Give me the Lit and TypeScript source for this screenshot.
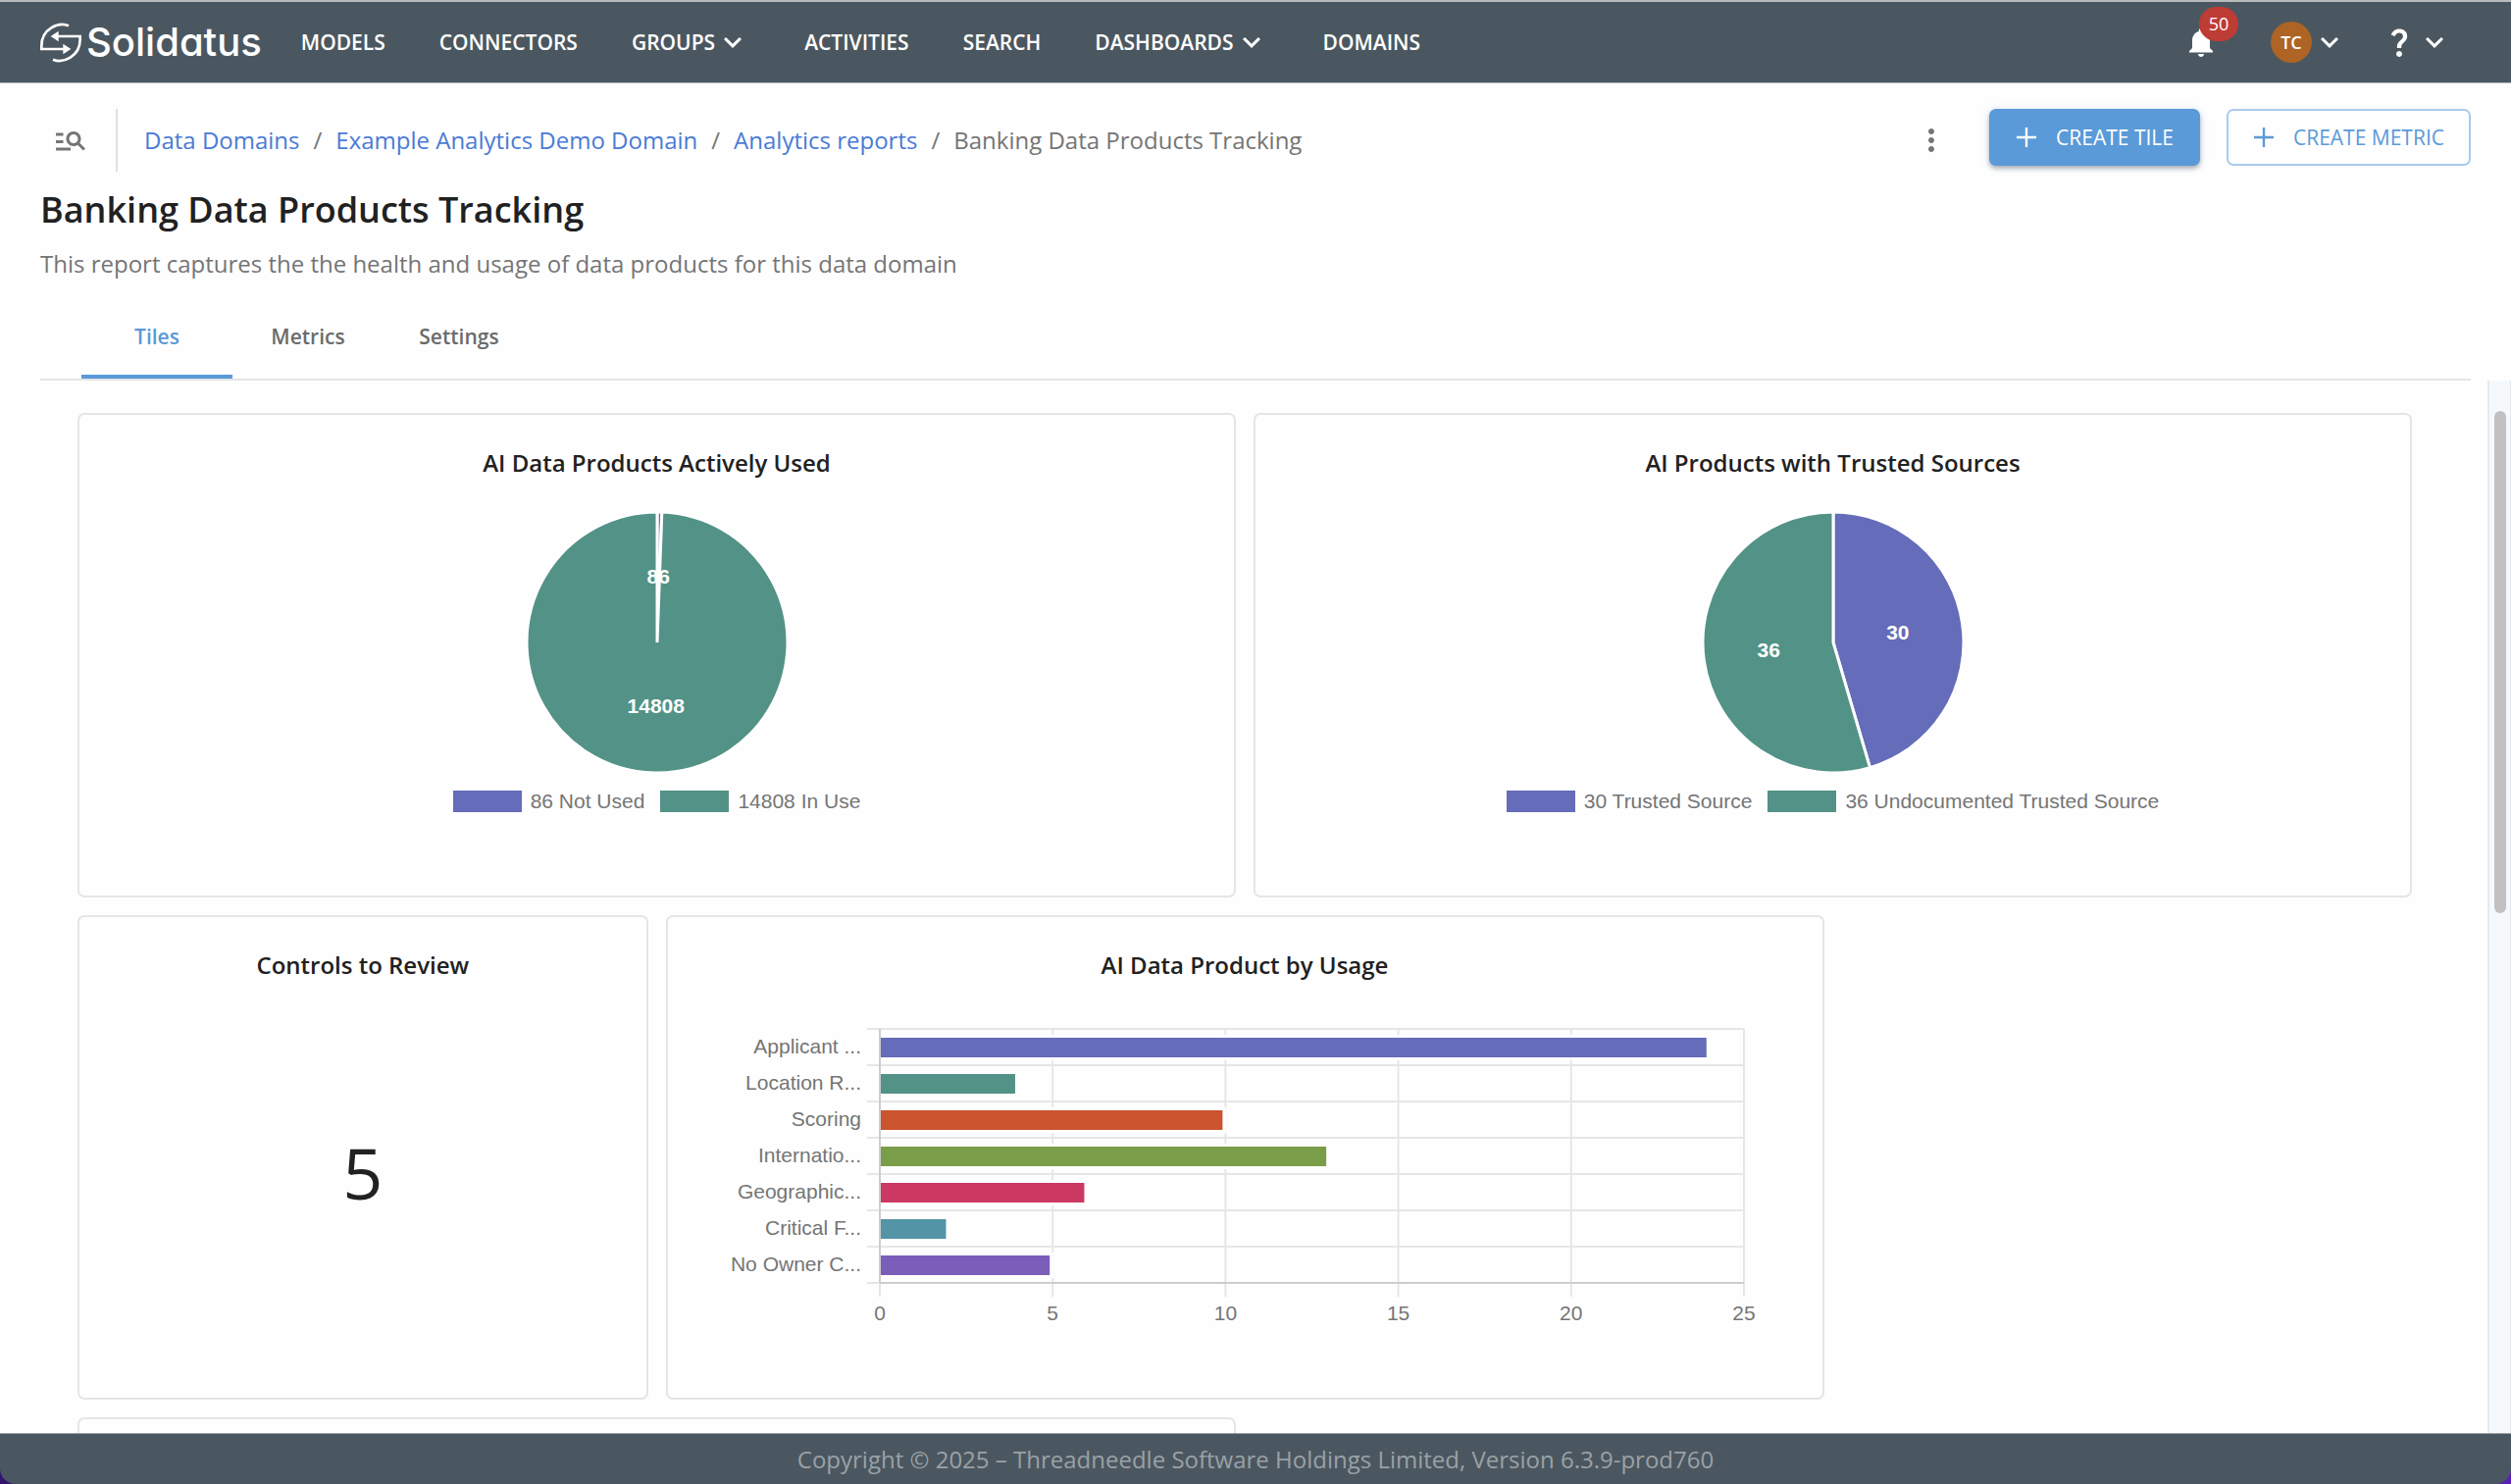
import { LitElement, html, svg, css } from "lit";
import { customElement, property } from "lit/decorators.js";

const ICONS = {
  chevron: "M16.59 8.59 12 13.17 7.41 8.59 6 10l6 6 6-6z",
  bell: "M12 22c1.1 0 2-.9 2-2h-4c0 1.1.89 2 2 2zm6-6v-5c0-3.07-1.64-5.64-4.5-6.32V4c0-.83-.67-1.5-1.5-1.5s-1.5.67-1.5 1.5v.68C7.63 5.36 6 7.92 6 11v5l-2 2v1h16v-1l-2-2z",
  question:
    "M11.07 12.85c.77-1.39 2.25-2.21 3.11-3.44.91-1.29.4-3.7-2.18-3.7-1.69 0-2.52 1.28-2.87 2.34L6.54 6.96C7.25 4.83 9.18 3 11.99 3c2.35 0 3.96 1.07 4.78 2.41.7 1.15 1.11 3.3.03 4.9-1.2 1.77-2.35 2.31-2.97 3.45-.25.46-.35.76-.35 2.24h-2.89c-.01-.78-.13-2.05.48-3.15zM14 20c0 1.1-.9 2-2 2s-2-.9-2-2 .9-2 2-2 2 .9 2 2z",
  search:
    "M7 9H2V7h5v2zm0 3H2v2h5v-2zm13.59 7-3.83-3.83c-.8.52-1.74.83-2.76.83-2.76 0-5-2.24-5-5s2.24-5 5-5 5 2.24 5 5c0 1.02-.31 1.96-.83 2.75L22 17.59 20.59 19zM17 11c0-1.65-1.35-3-3-3s-3 1.35-3 3 1.35 3 3 3 3-1.35 3-3zM2 19h10v-2H2v2z",
  more: "M12 8c1.1 0 2-.9 2-2s-.9-2-2-2-2 .9-2 2 .9 2 2 2zm0 2c-1.1 0-2 .9-2 2s.9 2 2 2 2-.9 2-2-.9-2-2-2zm0 6c-1.1 0-2 .9-2 2s.9 2 2 2 2-.9 2-2-.9-2-2-2z",
  plus: "M19.5 12.9h-6.6v6.6h-1.8v-6.6H4.5v-1.8h6.6V4.5h1.8v6.6h6.6z",
};

const icon = (name: keyof typeof ICONS) =>
  html`<svg class="icon" viewBox="0 0 24 24" aria-hidden="true"><path d=${ICONS[name]}></path></svg>`;

interface Slice {
  value: number;
  label: string;
  color: string;
}

@customElement("pie-chart")
class PieChart extends LitElement {
  @property({ attribute: false }) slices: Slice[] = [];

  static styles = css`
    :host {
      display: flex;
      flex-direction: column;
      align-items: center;
      gap: 17px;
      font-family: "Liberation Sans", Arial, sans-serif;
      font-size: 21px;
    }
    .pie {
      display: block;
      width: 268px;
      height: 268px;
      margin-top: 31px;
    }
    .slice {
      stroke: #fff;
      stroke-width: 3px;
      stroke-linejoin: bevel;
    }
    .value {
      fill: #fff;
      font-weight: 700;
      text-anchor: middle;
    }
    .legend {
      display: flex;
      gap: 16px;
      margin: 0;
      padding: 0;
      list-style: none;
      color: #757575;
    }
    .entry {
      display: flex;
      align-items: center;
      gap: 9px;
      line-height: 22px;
    }
    .swatch {
      width: 70px;
      height: 22px;
    }
  `;

  render() {
    const total = this.slices.reduce((sum, s) => sum + s.value, 0);
    const radius = 133;
    let from = 0;
    const arcs = this.slices.map((s) => {
      const to = from + (s.value / total) * Math.PI * 2;
      const mid = (from + to) / 2;
      const point = (a: number, r: number) => [134 + r * Math.sin(a), 134 - r * Math.cos(a)];
      const [x1, y1] = point(from, radius);
      const [x2, y2] = point(to, radius);
      const [tx, ty] = point(mid, radius / 2);
      const large = to - from > Math.PI ? 1 : 0;
      from = to;
      return { s, d: `M134 134L${x1} ${y1}A${radius} ${radius} 0 ${large} 1 ${x2} ${y2}Z`, tx, ty };
    });
    return html`
      <svg class="pie" viewBox="0 0 268 268" role="img">
        ${arcs.map((a) => svg`<path class="slice" d=${a.d} fill=${a.s.color}></path>`)}
        ${arcs.map((a) => svg`<text class="value" x=${a.tx} y=${a.ty + 6}>${a.s.value}</text>`)}
      </svg>
      <ul class="legend">
        ${this.slices.map(
          (s) => html`<li class="entry">
            <span class="swatch" style="background:${s.color}"></span>${s.value} ${s.label}
          </li>`
        )}
      </ul>
    `;
  }
}

@customElement("bar-chart")
class BarChart extends LitElement {
  @property({ attribute: false }) bars: Slice[] = [];

  static styles = css`
    :host {
      display: flex;
      justify-content: center;
    }
    .plot {
      display: block;
      width: 1100px;
      max-width: 100%;
      height: 320px;
      margin-top: 31px;
      font-family: "Liberation Sans", Arial, sans-serif;
      font-size: 21px;
    }
    .grid {
      stroke: #e6e6e6;
      stroke-width: 2px;
    }
    .axis {
      stroke: #cdcdcd;
      stroke-width: 2px;
    }
    .halo {
      fill: #fefefe;
    }
    .label {
      fill: #757575;
      text-anchor: end;
    }
    .tick {
      fill: #757575;
      text-anchor: middle;
    }
  `;

  render() {
    const left = 178;
    const top = 16;
    const row = 37;
    const unit = 35.24;
    const right = left + unit * 25;
    const bottom = top + row * this.bars.length;
    const ticks = [0, 5, 10, 15, 20, 25];
    const rows = [...this.bars.keys(), this.bars.length];
    return html`
      <svg class="plot" viewBox="0 0 1100 320" role="img">
        ${rows.map(
          (i) => svg`<line class="grid" x1=${left - 13} x2=${right} y1=${top + row * i} y2=${top + row * i}></line>`
        )}
        ${ticks.map(
          (t) => svg`<line class="grid" x1=${left + t * unit} x2=${left + t * unit} y1=${top} y2=${bottom + 14}></line>`
        )}
        ${this.bars.map((b, i) => {
          const y = top + row * i + 8;
          const w = b.value * unit - 4;
          return svg`
            <rect class="halo" x=${left} y=${y - 2} width=${w + 5} height="26"></rect>
            <rect x=${left + 1} y=${y + 1} width=${w} height="20" fill=${b.color}></rect>
            <text class="label" x=${left - 19} y=${y + 17}>${b.label}</text>`;
        })}
        <line class="axis" x1=${left} x2=${left} y1=${top} y2=${bottom}></line>
        <line class="axis" x1=${left} x2=${right} y1=${bottom} y2=${bottom}></line>
        ${ticks.map((t) => svg`<text class="tick" x=${left + t * unit} y=${bottom + 38}>${t}</text>`)}
      </svg>
    `;
  }
}

const NAV = [
  { label: "MODELS" },
  { label: "CONNECTORS" },
  { label: "GROUPS", menu: true },
  { label: "ACTIVITIES" },
  { label: "SEARCH" },
  { label: "DASHBOARDS", menu: true },
  { label: "DOMAINS" },
];

const CRUMBS = ["Data Domains", "Example Analytics Demo Domain", "Analytics reports"];
const TABS = ["Tiles", "Metrics", "Settings"];

const ACTIVE_USE: Slice[] = [
  { value: 86, label: "Not Used", color: "#656cb9" },
  { value: 14808, label: "In Use", color: "#539287" },
];
const TRUSTED: Slice[] = [
  { value: 30, label: "Trusted Source", color: "#656cb9" },
  { value: 36, label: "Undocumented Trusted Source", color: "#539287" },
];
const USAGE: Slice[] = [
  { value: 24, label: "Applicant ...", color: "#656cb9" },
  { value: 4, label: "Location R...", color: "#539287" },
  { value: 10, label: "Scoring", color: "#cb542f" },
  { value: 13, label: "Internatio...", color: "#7a9d49" },
  { value: 6, label: "Geographic...", color: "#cb3963" },
  { value: 2, label: "Critical F...", color: "#5395a6" },
  { value: 5, label: "No Owner C...", color: "#7b5dba" },
];

@customElement("app-root")
class AppRoot extends LitElement {
  static styles = css`
    :host {
      display: flex;
      flex-direction: column;
      height: 100vh;
      overflow: hidden;
      font-family: "Open Sans", sans-serif;
      font-size: 24px;
      line-height: 36px;
      color: #212121;
      background: linear-gradient(90deg, #33156f, #5a20b5);
    }
    * {
      box-sizing: border-box;
    }
    a {
      text-decoration: none;
    }
    button {
      margin: 0;
      padding: 0;
      border: 0;
      background: none;
      font: inherit;
      color: inherit;
    }
    .icon {
      display: block;
      flex: none;
      width: 36px;
      height: 36px;
      fill: currentColor;
    }

    .topbar {
      display: flex;
      align-items: center;
      flex: none;
      height: 85px;
      padding: 0 60px 0 41px;
      border-top: 2px solid #b9bcbd;
      border-bottom: 1px solid #b4babe;
      background: #4b5760;
      color: #fff;
      font-size: 21px;
      font-weight: 600;
    }
    .brand {
      display: flex;
      align-items: center;
      gap: 5px;
      color: #fff;
      font-family: Inter, sans-serif;
      font-size: 40px;
      font-weight: 500;
      font-feature-settings: "cv11";
    }
    .mark {
      display: block;
      width: 42px;
      height: 41px;
    }
    .nav {
      display: flex;
      gap: 55px;
      margin-left: 40px;
    }
    .nav-item {
      display: flex;
      align-items: center;
      color: #fff;
    }
    .account {
      display: flex;
      align-items: center;
      margin-left: auto;
    }
    .bell {
      position: relative;
      margin-right: 53px;
    }
    .badge {
      position: absolute;
      left: 16px;
      top: -18px;
      width: 40px;
      height: 35px;
      border-radius: 18px;
      background: #bd3c34;
      font-size: 18px;
      font-weight: 400;
      line-height: 34px;
      text-align: center;
    }
    .menu {
      display: flex;
      align-items: center;
    }
    .user {
      margin-right: 35px;
    }
    .avatar {
      width: 42px;
      height: 42px;
      border-radius: 50%;
      background: #ad6424;
      font-size: 18px;
      line-height: 42px;
      text-align: center;
    }

    .head {
      flex: none;
      padding: 26px 41px 0;
      background: #fefefe;
    }
    .toolbar {
      display: flex;
      align-items: center;
      height: 64px;
      color: #757575;
    }
    .find {
      margin: 0 28px 0 13px;
    }
    .crumbs {
      display: flex;
      gap: 14px;
      height: 64px;
      padding-left: 27px;
      border-left: 2px solid #e0e0e0;
      align-items: center;
    }
    .crumb {
      color: #4a7bd6;
    }
    .actions {
      display: flex;
      align-items: center;
      gap: 27px;
      height: 64px;
      margin-left: auto;
    }
    .more {
      margin-right: 14px;
    }
    .btn {
      display: flex;
      align-items: center;
      align-self: flex-start;
      gap: 14px;
      height: 58px;
      padding: 0 25px 0 20px;
      border: 2px solid #a9cbec;
      border-radius: 7px;
      color: #5a9ad8;
      font-size: 21px;
    }
    .btn .icon {
      width: 32px;
      height: 32px;
    }
    .primary {
      border-color: #5a9ad8;
      background: #5a9ad8;
      color: #fff;
      box-shadow: 0 3px 4px rgba(0, 0, 0, 0.25), 0 1px 8px rgba(90, 154, 216, 0.25);
    }
    .title {
      margin: 15px 0 0;
      font-size: 36px;
      font-weight: 600;
      line-height: 48px;
    }
    .summary {
      margin: 13px 0 0;
      color: #757575;
    }
    .tabs {
      display: flex;
      margin-top: 13px;
      padding-left: 42px;
      border-bottom: 2px solid #e3e4e5;
    }
    .tab {
      min-width: 154px;
      height: 86px;
      padding: 4px 36px 0;
      border-bottom: 4px solid transparent;
      color: #6b6b6b;
      font-size: 21px;
      font-weight: 600;
    }
    .tab[aria-selected="true"] {
      border-color: #5a9ad8;
      color: #5a9ad8;
    }

    .body {
      display: flex;
      flex: 1;
      min-height: 0;
      background: #fefefe;
    }
    .tiles {
      display: grid;
      grid-template-columns: repeat(4, 1fr);
      grid-auto-rows: 494px;
      gap: 18px;
      flex: 1;
      padding: 33px 77px 0 79px;
      overflow: hidden;
    }
    .card {
      display: flex;
      flex-direction: column;
      padding: 31px 0;
      border: 2px solid #e3e5e7;
      border-radius: 7px;
    }
    .wide {
      grid-column: span 2;
    }
    .third-row {
      grid-column: 1 / span 2;
    }
    .card-title {
      margin: 0;
      font-size: 24px;
      font-weight: 600;
      text-align: center;
    }
    .metric {
      flex: 1;
      display: flex;
      align-items: center;
      justify-content: center;
      margin: 0;
      padding-bottom: 6px;
      font-size: 72px;
    }
    .track {
      flex: none;
      width: 24px;
      padding: 31px 5px 0;
      border-left: 2px solid #e6e9ec;
      border-right: 1px solid #e6e9ec;
      background: #f6f9fc;
    }
    .thumb {
      width: 12px;
      height: 512px;
      border-radius: 6px;
      background: #c1c1c1;
    }

    .footer {
      flex: none;
      height: 52px;
      border-top: 1px solid #98a0a5;
      border-radius: 0 0 16px 16px;
      background: #4b5760;
      color: #9aa1a6;
      line-height: 52px;
      text-align: center;
    }
  `;

  render() {
    return html`
      <header class="topbar">
        <a class="brand" href="#">
          <svg class="mark" viewBox="0 0 126 121" fill="none" stroke="#fff" stroke-width="8" aria-hidden="true">
            <path d="M87 9C56 -4 4 18 4 70V80H74"></path>
            <path d="M39 112C70 125 122 103 122 51V41H52"></path>
            <path d="M70 64 94 80 70 96ZM56 25 32 41 56 57Z" fill="#fff" stroke="none"></path>
          </svg>
          <span>Solidatus</span>
        </a>
        <nav class="nav">
          ${NAV.map((n) =>
            n.menu
              ? html`<button class="nav-item">${n.label}${icon("chevron")}</button>`
              : html`<a class="nav-item" href="#">${n.label}</a>`
          )}
        </nav>
        <div class="account">
          <button class="bell" aria-label="Notifications">${icon("bell")}<span class="badge">50</span></button>
          <button class="menu user"><span class="avatar">TC</span>${icon("chevron")}</button>
          <button class="menu" aria-label="Help">${icon("question")}${icon("chevron")}</button>
        </div>
      </header>

      <section class="head">
        <div class="toolbar">
          <button class="find" aria-label="Browse">${icon("search")}</button>
          <nav class="crumbs">
            ${CRUMBS.map((c) => html`<a class="crumb" href="#">${c}</a><span>/</span>`)}
            <span>Banking Data Products Tracking</span>
          </nav>
          <div class="actions">
            <button class="more" aria-label="More">${icon("more")}</button>
            <button class="btn primary">${icon("plus")}CREATE TILE</button>
            <button class="btn">${icon("plus")}CREATE METRIC</button>
          </div>
        </div>
        <h1 class="title">Banking Data Products Tracking</h1>
        <p class="summary">This report captures the the health and usage of data products for this data domain</p>
        <div class="tabs" role="tablist">
          ${TABS.map((t, i) => html`<button class="tab" role="tab" aria-selected=${i === 0}>${t}</button>`)}
        </div>
      </section>

      <main class="body">
        <div class="tiles">
          <article class="card wide">
            <h2 class="card-title">AI Data Products Actively Used</h2>
            <pie-chart .slices=${ACTIVE_USE}></pie-chart>
          </article>
          <article class="card wide">
            <h2 class="card-title">AI Products with Trusted Sources</h2>
            <pie-chart .slices=${TRUSTED}></pie-chart>
          </article>
          <article class="card">
            <h2 class="card-title">Controls to Review</h2>
            <p class="metric">5</p>
          </article>
          <article class="card wide">
            <h2 class="card-title">AI Data Product by Usage</h2>
            <bar-chart .bars=${USAGE}></bar-chart>
          </article>
          <article class="card third-row"></article>
        </div>
        <div class="track"><div class="thumb"></div></div>
      </main>

      <footer class="footer">Copyright © 2025 – Threadneedle Software Holdings Limited, Version 6.3.9-prod760</footer>
    `;
  }
}
